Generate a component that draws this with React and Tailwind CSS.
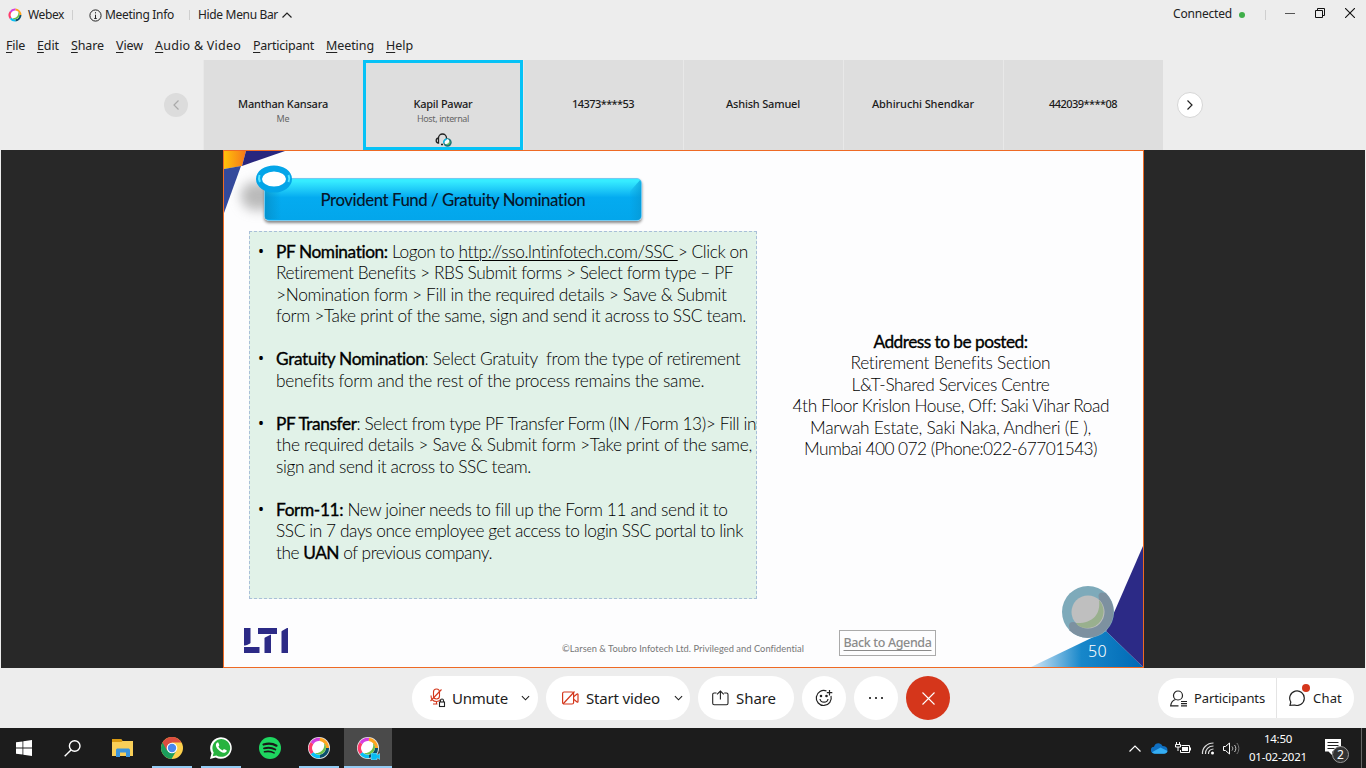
import React, { useLayoutEffect, useRef, useState } from "react";

/* Spreads its text evenly over the width given by the class name. */
function Fit({ className = "", children }) {
  const box = useRef(null);
  const inner = useRef(null);
  const [spacing, setSpacing] = useState(0);
  useLayoutEffect(() => {
    const count = inner.current.textContent.length;
    const natural = inner.current.getBoundingClientRect().width;
    const room = box.current.getBoundingClientRect().width;
    setSpacing((room - natural) / count);
  }, []);
  return (
    <div ref={box} className={"shrink-0 whitespace-pre " + className}>
      <span ref={inner} className="inline-block" style={{ letterSpacing: spacing + "px" }}>
        {children}
      </span>
    </div>
  );
}

function WebexMark({ className, ring = false }) {
  return (
    <svg viewBox="0 0 24 24" className={className} fill="none">
      {ring && <circle cx="12" cy="12" r="12" fill="#e8e8e8" />}
      <circle cx="12" cy="12" r="8" fill="#fff" />
      <path d="M13 2.700A9.300 9.300 0 0 0 4.300 6.800" stroke="#d63fe0" strokeWidth="3.600" />
      <path d="M4.300 6.800A9.300 9.300 0 0 0 4.600 17.600" stroke="#ff3b6b" strokeWidth="3.600" />
      <path d="M4.600 17.600A9.300 9.300 0 0 0 13 21.200" stroke="#07c1f4" strokeWidth="3.600" />
      <path d="M13 21.200A9.300 9.300 0 0 0 21.300 12" stroke="#0b4f6c" strokeWidth="3.600" />
      <path d="M21.300 12A9.300 9.300 0 0 0 13 2.700" stroke="#ffa51f" strokeWidth="3.600" />
      <path d="M17.500 6.500c1.500 6-3 11.500-10 11 3.500 3 9.500 1.700 11.500-3 1.200-3 .5-6-1.500-8z" fill="#6cc04a" />
    </svg>
  );
}

function Chevron({ className, d = "M1 1l4 4 4-4", box = "0 0 10 6" }) {
  return (
    <svg viewBox={box} className={className} fill="none" stroke="currentColor" strokeWidth="1.2">
      <path d={d} />
    </svg>
  );
}

function TopBar() {
  return (
    <div className="flex h-[30px] items-center pl-2 text-[12px] text-[#222]">
      <WebexMark className="h-[14px] w-[14px]" />
      <Fit className="ml-[6px] w-[36px]">Webex</Fit>
      <div className="ml-[8px] h-[10px] w-px bg-[#cfcfcf]" />
      <svg viewBox="0 0 13 13" className="ml-[16px] h-[13px] w-[13px]" fill="none" stroke="#222">
        <circle cx="6.500" cy="6.500" r="5.600" />
        <path d="M6.500 5.700v4M6.500 3.200v1.200M5.300 9.500h2.400" />
      </svg>
      <Fit className="ml-[3px] w-[69px]">Meeting Info</Fit>
      <div className="ml-[15px] h-[10px] w-px bg-[#cfcfcf]" />
      <Fit className="ml-[8px] w-[80px]">Hide Menu Bar</Fit>
      <Chevron className="ml-[4px] h-[6px] w-[10px]" d="M.5 5.500l4.500-4.500 4.500 4.500" />
      <div className="ml-auto flex items-center pr-[11px]">
        <Fit className="w-[59px] -translate-y-px">Connected</Fit>
        <div className="ml-[7px] h-[6px] w-[6px] rounded-full bg-[#3fae49]" />
        <div className="ml-[20px] h-[10px] w-px bg-[#cfcfcf]" />
        <div className="ml-[19px] h-px w-[10px] -translate-y-[2px] bg-[#555]" />
        <svg viewBox="0 0 10 10" className="ml-[20px] h-[10px] w-[10px] -translate-y-[2px]" fill="none" stroke="#111">
          <path d="M.5 2.500h7v7h-7zM2.500 2.500v-2h7v7h-2" />
        </svg>
        <svg viewBox="0 0 10 10" className="ml-[20px] h-[10px] w-[10px] -translate-y-[2px]" fill="none" stroke="#111" strokeWidth="1.100">
          <path d="M0 0l10 10M10 0L0 10" />
        </svg>
      </div>
    </div>
  );
}

const menus = [
  ["F", "ile", "w-[19px]"],
  ["E", "dit", "w-[22px] ml-[12px]"],
  ["S", "hare", "w-[33px] ml-[12px]"],
  ["V", "iew", "w-[27px] ml-[12px]"],
  ["A", "udio & Video", "w-[86px] ml-[12px]"],
  ["P", "articipant", "w-[61px] ml-[12px]"],
  ["M", "eeting", "w-[48px] ml-[12px]"],
  ["H", "elp", "w-[27px] ml-[12px]"],
];

function MenuBar() {
  return (
    <div className="flex h-[30px] items-center pt-[2px] pl-[6px] text-[12.500px] text-[#222]">
      {menus.map(([key, rest, cls]) => (
        <Fit key={rest} className={cls}>
          <span className="underline underline-offset-2">{key}</span>
          {rest}
        </Fit>
      ))}
    </div>
  );
}

function Tile({ name, width, note, noteWidth, active }) {
  return (
    <div
      className={
        "flex h-[90px] w-[160px] flex-col items-center bg-[#dedede] " +
        (active ? "border-[3px] border-[#06c2f6] pt-[33px]" : "border-x border-l-[#e8e8e8] border-r-[#dedede] pt-[36px]")
      }
    >
      <Fit className={"h-4 text-[11px] leading-4 font-medium text-[#1b1b1b] " + width}>{name}</Fit>
      {note && <Fit className={"h-[13px] text-[9px] leading-[13px] text-[#666] " + noteWidth}>{note}</Fit>}
      {active && (
        <svg viewBox="0 0 18 15" className="mt-[7px] h-[15px] w-[18px] shrink-0" fill="none" stroke="#222" strokeWidth="1.300">
          <path d="M4.500 9V6a4 4 0 0 1 8 0v1M4.500 6C3 6 2.200 7 2.200 8.500s.8 2.500 2.300 2.500zM7 12.500h2" />
          <circle cx="13.500" cy="10.500" r="4.200" fill="#1b6f78" stroke="none" />
          <circle cx="12.800" cy="9.700" r="2.600" fill="#fff" stroke="none" />
          <path d="M9.700 11a4 4 0 0 1 3-4" stroke="#08b6e6" />
          <path d="M16 9.500c-.4 2-1.500 3-3.500 3.200" stroke="#68b85e" />
        </svg>
      )}
    </div>
  );
}

function Filmstrip() {
  return (
    <div className="flex h-[90px] items-center">
      <div className="ml-[164px] flex h-6 w-6 items-center justify-center rounded-full bg-[#dcdcdc] text-[#aaa]">
        <Chevron className="h-[10px] w-[6px]" box="0 0 6 10" d="M5.500.500L1 5l4.500 4.500" />
      </div>
      <div className="ml-[15px] flex">
        <Tile name="Manthan Kansara" width="w-[90px]" note="Me" noteWidth="w-[13px]" />
        <Tile name="Kapil Pawar" width="w-[59px]" note="Host, internal" noteWidth="w-[52px]" active />
        <Tile name="14373****53" width="w-[62px]" />
        <Tile name="Ashish Samuel" width="w-[74px]" />
        <Tile name="Abhiruchi Shendkar" width="w-[102px]" />
        <Tile name="442039****08" width="w-[68px]" />
      </div>
      <div className="ml-[14px] flex h-[26px] w-[26px] items-center justify-center rounded-full border border-[#d6d6d6] bg-white text-[#222]">
        <Chevron className="h-[10px] w-[6px]" box="0 0 6 10" d="M.5.500L5 5 .5 9.500" />
      </div>
    </div>
  );
}

function Bullet({ lines, last }) {
  return (
    <li className={"flex " + (last ? "" : "mb-[21.540px]")}>
      <span className="w-[18px] shrink-0 font-[Noto_Sans,sans-serif] text-[16px] font-normal text-black">•</span>
      <div>
        {lines.map(([width, content], i) => (
          <Fit key={i} className={"h-[21.540px] " + width}>
            {content}
          </Fit>
        ))}
      </div>
    </li>
  );
}

function B({ children }) {
  return <span className="font-normal text-black [-webkit-text-stroke:0.35px_black]">{children}</span>;
}

function Nominations() {
  return (
    <ul className="mt-[10px] ml-[25px] h-[368px] w-[508px] shrink-0 border border-dashed border-[#a9bfd8] bg-[#e1f2e8] pt-[8.500px] pl-[8px] font-[Lato,sans-serif] text-[17.300px] leading-[21.540px] font-light text-black">
      <Bullet
        lines={[
          ["w-[472px]", <><B>PF Nomination:</B> Logon to <span className="underline decoration-1 underline-offset-2">http://sso.lntinfotech.com/SSC </span>&gt; Click on</>],
          ["w-[457px]", "Retirement Benefits > RBS Submit forms > Select form type – PF"],
          ["w-[451px]", ">Nomination form > Fill in the required details > Save & Submit"],
          ["w-[470px]", "form >Take print of the same, sign and send it across to SSC team."],
        ]}
      />
      <Bullet
        lines={[
          ["w-[465px]", <><B>Gratuity Nomination</B>: Select Gratuity  from the type of retirement</>],
          ["w-[428px]", "benefits form and the rest of the process remains the same."],
        ]}
      />
      <Bullet
        lines={[
          ["w-[480px]", <><B>PF Transfer</B>: Select from type PF Transfer Form (IN /Form 13)&gt; Fill in</>],
          ["w-[476px]", "the required details > Save & Submit form >Take print of the same,"],
          ["w-[255px]", "sign and send it across to SSC team."],
        ]}
      />
      <Bullet
        last
        lines={[
          ["w-[451px]", <><B>Form-11:</B> New joiner needs to fill up the Form 11 and send it to</>],
          ["w-[467px]", "SSC in 7 days once employee get access to login SSC portal to link"],
          ["w-[216px]", <>the <B>UAN</B> of previous company.</>],
        ]}
      />
    </ul>
  );
}

function Address() {
  return (
    <div className="flex w-[389px] flex-col items-center pt-[109.500px] pl-px font-[Lato,sans-serif] text-[17.300px] leading-[21.540px] font-light text-black">
      <Fit className="w-[154px]"><B>Address to be posted:</B></Fit>
      <Fit className="w-[200px]">Retirement Benefits Section</Fit>
      <Fit className="w-[198px]">L&amp;T-Shared Services Centre</Fit>
      <Fit className="w-[316px]">4th Floor Krislon House, Off: Saki Vihar Road</Fit>
      <Fit className="w-[281px]">Marwah Estate, Saki Naka, Andheri (E ),</Fit>
      <Fit className="w-[293px]">Mumbai 400 072 (Phone:022-67701543)</Fit>
    </div>
  );
}

function Slide() {
  return (
    <div className="relative flex h-[518px] w-[921px] flex-col overflow-hidden border border-[#ee6a24] bg-[#fdfdfe]">
      <svg viewBox="0 0 62 64" className="absolute top-0 left-0 h-16 w-[62px]">
        <defs>
          <linearGradient id="sun"><stop stopColor="#ffc20a" /><stop offset="1" stopColor="#f5761a" /></linearGradient>
        </defs>
        <path d="M0 0h22l-4 15-18 3z" fill="url(#sun)" />
        <path d="M22 0h39L18 15z" fill="#28267e" />
        <path d="M0 18l17-3L0 62z" fill="#344a9c" />
      </svg>
      <div className="absolute top-[31px] left-[17px] h-7 w-9 rounded-full bg-[#777]/50 blur-[6px]" />
      <svg viewBox="0 0 112 122" className="absolute right-0 bottom-0 h-[122px] w-[112px]">
        <defs>
          <linearGradient id="sea"><stop stopColor="#d4e8f7" /><stop offset=".45" stopColor="#1787ca" /><stop offset="1" stopColor="#0069b5" /></linearGradient>
        </defs>
        <path d="M0 122L75 86l37 36z" fill="url(#sea)" />
        <path d="M112 1v121L75 86z" fill="#2c2a86" />
        <circle cx="57" cy="67" r="26" fill="#7eaaba" />
        <path d="M74 47.500a26 26 0 1 1-36 37.500z" fill="#7d91a0" />
        <circle cx="57" cy="67" r="16.500" fill="#bfbfbf" />
        <path d="M68 55c2 15-7 24-24 23a16.500 16.500 0 0 0 24-23z" fill="#99b08e" />
        <circle cx="71" cy="51" r="3.500" fill="#7d91a0" />
        <circle cx="42" cy="81" r="4" fill="#7d91a0" />
      </svg>

      <div className="relative mt-[27px] ml-10 flex h-[43px] w-[378px] shrink-0 items-center justify-center rounded-[5px] border border-[#73caf1] bg-gradient-to-b from-[#36ecff] from-5% via-[#04abf0] via-45% to-[#03a6eb] shadow-[0_2px_3px_#888]">
        <div className="absolute top-0 right-0 h-[41px] w-[11px] rounded-r-[4px] bg-gradient-to-r from-[#02a6ea]/20 to-[#0798d4]/70 [clip-path:polygon(100%_0,100%_100%,0_100%,0_30%)]" />
        <div className="absolute top-2 left-0 h-8 w-4 bg-gradient-to-r from-[#0787bd]/60 to-transparent" />
        <svg viewBox="0 0 38 28" className="absolute -top-[14px] -left-[10px] h-7 w-[38px]" fill="none">
          <ellipse cx="19" cy="14" rx="15" ry="10.500" fill="#fff" stroke="#04a5e8" strokeWidth="6" />
          <path d="M4.500 10a15 11 0 0 0 .5 7M33.500 10a15 11 0 0 1 0 7" stroke="#56e4ff" strokeWidth="2" />
        </svg>
        <Fit className="relative w-[265px] font-[Lato,sans-serif] text-[16.800px] font-medium text-[#07172a]">Provident Fund / Gratuity Nomination</Fit>
      </div>

      <div className="flex">
        <Nominations />
        <Address />
      </div>

      <div className="flex pl-5">
        <svg viewBox="0 0 44 25" className="mt-[29px] h-[25px] w-[44px]" fill="#2c2a86">
          <rect x="0" y="0" width="6.500" height="17.500" />
          <rect x="0" y="19" width="15.500" height="6" />
          <rect x="14" y="0" width="19" height="6" />
          <rect x="20.500" y="6" width="6.500" height="19" />
          <rect x="37.500" y="0" width="6.500" height="25" />
          <path d="M0 18.500L7 15v4H0zM20 5.900h7v.6L20 10zM37 0h6l-6 3.500z" fill="#fdfdfe" />
        </svg>
        <Fit className="mt-[42px] ml-[274px] w-[242px] font-[Lato,sans-serif] text-[9.300px] leading-4 text-[#777]">©Larsen &amp; Toubro Infotech Ltd. Privileged and Confidential</Fit>
        <div className="mt-[31px] ml-[35px] flex h-[26px] w-[97px] items-center justify-center border border-[#aaa]">
          <Fit className="w-[88px] font-[Noto_Sans,sans-serif] text-[12.500px] font-medium text-[#8b8b8b]">
            <span className="underline underline-offset-[3px]">Back to Agenda</span>
          </Fit>
        </div>
        <Fit className="relative mt-[42px] ml-[152px] w-[19px] font-[Noto_Sans,sans-serif] text-[16px] leading-5 font-light text-white">50</Fit>
      </div>
    </div>
  );
}

function Controls() {
  const pill = "flex h-11 items-center rounded-full bg-white ";
  return (
    <div className="flex h-[60px] items-center pl-[412px] text-[15px] text-[#1c1c1c]">
      <div className="flex gap-2">
        <div className={pill + "w-[126px] pl-[17px]"}>
          <svg viewBox="0 0 17 20" className="h-5 w-[17px]" fill="none" stroke="#d4371c" strokeWidth="1.100">
            <rect x="4.500" y="1" width="6" height="10" rx="3" />
            <path d="M2 7.500c0 4 2.500 6 5.500 6 1.500 0 3-.6 4-1.800M7.500 13.500V16M4 16h4.500M12.500 1.500L1.500 13" />
            <rect x="10.500" y="14" width="5" height="4.500" fill="#fff" stroke="#222" />
            <path d="M11.500 14v-1.500a1.500 1.500 0 0 1 3 0V14" stroke="#222" />
          </svg>
          <Fit className="ml-[6px] w-[56px]">Unmute</Fit>
          <Chevron className="ml-[13px] h-[6px] w-[9px]" />
        </div>
        <div className={pill + "w-[144px] pl-[16px]"}>
          <svg viewBox="0 0 17 14" className="h-[14px] w-[17px]" fill="none" stroke="#d4371c" strokeWidth="1.200">
            <rect x=".600" y="1" width="11" height="12" rx="1.500" />
            <path d="M1 13L12.500.500M12 5.500l3-2.500c.8-.4 1 0 1 .5v7c0 .6-.4.900-1 .5l-3-2.500" />
          </svg>
          <Fit className="ml-[7px] w-[74px]">Start video</Fit>
          <Chevron className="ml-[14px] h-[6px] w-[9px]" />
        </div>
        <div className={pill + "w-[96px] pl-[14px]"}>
          <svg viewBox="0 0 17 16" className="h-4 w-[17px]" fill="none" stroke="#222" strokeWidth="1.100">
            <path d="M4.500 3H2.200C1.300 3 .7 3.600.7 4.500v8.800c0 .8.600 1.500 1.500 1.500h12.300c.9 0 1.500-.7 1.500-1.500V4.500c0-.9-.6-1.500-1.500-1.500h-2.300M8.400 9.500V1M5 4.300L8.400 1l3.400 3.300" />
          </svg>
          <Fit className="ml-[7px] w-[40px]">Share</Fit>
        </div>
        <div className={pill + "w-11 justify-center"}>
          <svg viewBox="0 0 18 18" className="h-[18px] w-[18px]" fill="none" stroke="#222" strokeWidth="1.200">
            <path d="M11.500 2A7.500 7.500 0 1 0 16 7M14.500 1v5.500M11.800 3.700h5.500M5 10c.6 4.200 7.500 4.200 8 0" />
            <circle cx="6" cy="7" r=".7" fill="#222" />
            <circle cx="11.500" cy="7" r=".7" fill="#222" />
          </svg>
        </div>
        <div className={pill + "w-11 justify-center gap-[4px]"}>
          <i className="h-[2px] w-[2px] bg-[#444]" />
          <i className="h-[2px] w-[2px] bg-[#444]" />
          <i className="h-[2px] w-[2px] bg-[#444]" />
        </div>
        <div className="flex h-11 w-11 items-center justify-center rounded-full bg-[#d5361b]">
          <svg viewBox="0 0 13 13" className="h-[13px] w-[13px]" stroke="#fff" strokeWidth="1.100">
            <path d="M.5.500l12 12M12.500.500l-12 12" />
          </svg>
        </div>
      </div>

      <div className="ml-auto mr-3 flex h-10 w-[196px] items-center rounded-full bg-white text-[13px]">
        <svg viewBox="0 0 18 17" className="ml-[12px] h-[17px] w-[18px]" fill="none" stroke="#222" strokeWidth="1.200">
          <circle cx="8" cy="5.500" r="4.500" />
          <path d="M5.500 9.500C2.500 10.500 1 12.500.7 15.800h7.800M11 11.500h6M11 13.700h6M11 15.900h6" />
        </svg>
        <Fit className="ml-[6px] w-[71px] translate-y-px">Participants</Fit>
        <div className="ml-[11px] h-10 w-px bg-[#e4e4e4]" />
        <div className="relative ml-[11px] h-4 w-[17px]">
          <svg viewBox="0 0 17 16" className="h-4 w-[17px]" fill="none" stroke="#222" strokeWidth="1.200">
            <path d="M2 15.300L2.800 12A7.300 7.300 0 1 1 6.500 15z" />
          </svg>
          <div className="absolute -top-[6px] left-[14px] h-2 w-2 rounded-full bg-[#d5361b]" />
        </div>
        <Fit className="ml-[8px] w-[29px] translate-y-px">Chat</Fit>
      </div>
    </div>
  );
}

function Task({ children, line, active, className = "" }) {
  return (
    <div className={"relative flex h-10 w-12 items-center justify-center " + (active ? "bg-[#4a4a4a] " : "") + className}>
      {children}
      {line && <div className={"absolute bottom-0 h-[2px] bg-[#93cbf3] " + (active ? "w-12" : "w-10")} />}
    </div>
  );
}

function Taskbar() {
  return (
    <div className="flex h-10 items-center bg-[#1c1c1c] text-white">
      <Task>
        <svg viewBox="0 0 16 16" className="h-4 w-4" fill="#fff">
          <path d="M0 2.300L6.500 1.400v6.200H0zM7.300 1.300L16 0v7.600H7.300zM0 8.400h6.500v6.200L0 13.700zM7.300 8.400H16V16l-8.700-1.200z" />
        </svg>
      </Task>
      <Task>
        <svg viewBox="0 0 17 17" className="h-[17px] w-[17px]" fill="none" stroke="#fff" strokeWidth="1.400">
          <circle cx="10.700" cy="6" r="5.300" />
          <path d="M7 10L.7 16.300" />
        </svg>
      </Task>
      <Task className="ml-[3px]">
        <svg viewBox="0 0 22 18" className="h-[18px] w-[22px]">
          <path d="M0 0h9l1.500 2H21v15H0z" fill="#f9cf58" />
          <path d="M0 0h9l1.500 2-1 1H0z" fill="#d99a12" />
          <path d="M4 18v-6.500C4 10 4.500 9.500 6 9.500h10c1.300 0 2 .5 2 2V18h-4v-4.500H8V18z" fill="#3b94dc" />
        </svg>
      </Task>
      <Task line className="ml-px">
        <svg viewBox="0 0 22 22" className="h-[22px] w-[22px]">
          <circle cx="11" cy="11" r="11" fill="#fdd04c" />
          <path d="M1.500 5.500A11 11 0 0 0 10.500 22l5-8.500L11 11z" fill="#1b9e5c" />
          <path d="M1.500 5.500A11 11 0 0 1 20.500 5.500H11L6 13.500z" fill="#dc4d3f" />
          <circle cx="11" cy="11" r="5.300" fill="#fff" />
          <circle cx="11" cy="11" r="4.200" fill="#4a87ee" />
        </svg>
      </Task>
      <Task line className="ml-px">
        <svg viewBox="0 0 22 22" className="h-[22px] w-[22px]">
          <path d="M0 22l1.500-5.700A10.800 10.800 0 1 1 5.700 20.500z" fill="#fff" />
          <path d="M2.700 19.300l1-3.700A8.900 8.900 0 1 1 6.400 18.400z" fill="#27b33f" />
          <path d="M7.200 5.500c-2.300 2-1.200 4.700 1 7.100 2.200 2.500 5.100 4.200 7.400 2.700 1.200-.8 1.200-1.500 1-2.100l-2.700-1.300-1.300 1.500c-2.200-.8-3.400-2-4.200-3.800l1-1.300-1.100-2.700z" fill="#fff" />
        </svg>
      </Task>
      <Task className="ml-px">
        <svg viewBox="0 0 22 22" className="h-[22px] w-[22px]" fill="none" stroke="#191919" strokeLinecap="round">
          <circle cx="11" cy="11" r="11" fill="#1ed760" stroke="none" />
          <path d="M4.500 7.500c4.500-1.300 9.500-.9 13 1.200" strokeWidth="2.200" />
          <path d="M5 11.300c4-1 8-.7 11.300 1.200" strokeWidth="1.900" />
          <path d="M5.500 14.800c3.500-.8 6.700-.5 9.600 1.100" strokeWidth="1.600" />
        </svg>
      </Task>
      <Task line className="ml-px"><WebexMark ring className="h-[22px] w-[22px]" /></Task>
      <Task line active className="ml-px">
        <WebexMark ring className="h-[22px] w-[22px]" />
        <svg viewBox="0 0 9 7" className="absolute top-[25px] left-[27px] h-[7px] w-[9px]" fill="#08bdf2" stroke="#e8e8e8" strokeWidth=".4"><path d="M0 0h6v2l3-1.500v6L6 5v2H0z" /></svg>
      </Task>

      <div className="ml-auto flex h-10 items-center">
        <Chevron className="h-[7px] w-[12px]" box="0 0 12 7" d="M.5 6.500L6 1l5.500 5.500" />
        <svg viewBox="0 0 17 11" className="ml-[10px] h-[11px] w-[17px]">
          <path d="M3.500 10.500A3.400 3.400 0 0 1 3 3.700C4-.2 9.500-1 11.500 3c3 0 5 1.500 5 4 0 2.200-1.500 3.500-3.500 3.500z" fill="#0f6fc0" />
          <path d="M5 10.800c-1.500 0-3-.4-4-1.600L9.500 4.500l7 3.500c-.4 1.800-1.700 2.800-3.500 2.800z" fill="#35adf2" />
        </svg>
        <svg viewBox="0 0 17 13" className="ml-[7px] h-[13px] w-[17px]" fill="none" stroke="#fff">
          <path d="M6.500 3.500h8v7h-9V8M15.500 5.500v3M1.500 0v2M4.500 0v2M.5 2.500h5v2.500H.5zM3 5v4" />
          <rect x="7" y="5" width="6" height="4" fill="#fff" stroke="none" />
        </svg>
        <svg viewBox="0 0 14 14" className="ml-[9px] h-[14px] w-[14px]" fill="none" stroke="#ddd" strokeWidth="1.200">
          <path d="M1.500 13C1 7 6 2 12.500 2M4.500 13c-.4-4.500 3-8 8-8M7.500 13c-.3-3 2-5 5-5" />
          <circle cx="11.500" cy="12" r="1.500" fill="#fff" stroke="none" />
        </svg>
        <svg viewBox="0 0 17 13" className="ml-[8px] h-[13px] w-[17px]" fill="none" stroke="#fff">
          <path d="M.5 4.500h2L6.500 1v11L2.500 8.500h-2z" />
          <path d="M9 4.500c1 1.200 1 2.800 0 4M11.500 3c1.800 2 1.800 5 0 7" stroke="#ccc" />
          <path d="M13.800 1c2.700 3 2.700 8 0 11" stroke="#777" />
        </svg>
        <div className="ml-[9px] flex w-[58px] flex-col items-center text-[11.500px] leading-[18px]">
          <Fit className="w-[28px]">14:50</Fit>
          <Fit className="w-[58px]">01-02-2021</Fit>
        </div>
        <div className="relative ml-[18px] h-[26px] w-6">
          <svg viewBox="0 0 16 16" className="absolute top-[4px] left-0 h-4 w-4">
            <path d="M0 0h16v12.500H7V16l-3.500-3.500H0z" fill="#fff" />
            <path d="M2.500 3.500h11M2.500 6.500h11M2.500 9.500h7" stroke="#222" />
          </svg>
          <div className="absolute top-[11px] left-[7px] flex h-[17px] w-[17px] items-center justify-center rounded-full border border-[#999] bg-[#333] text-[12px] leading-none">2</div>
        </div>
        <div className="ml-[12px] mr-1 h-10 w-px bg-[#666]" />
      </div>
    </div>
  );
}

export default function App() {
  return (
    <div className="flex h-[768px] w-[1366px] flex-col overflow-hidden bg-[#ededed] font-[Noto_Sans,sans-serif]">
      <TopBar />
      <MenuBar />
      <Filmstrip />
      <div className="mx-px flex h-[518px] bg-[#282828] pl-[222px]">
        <Slide />
      </div>
      <Controls />
      <Taskbar />
    </div>
  );
}
